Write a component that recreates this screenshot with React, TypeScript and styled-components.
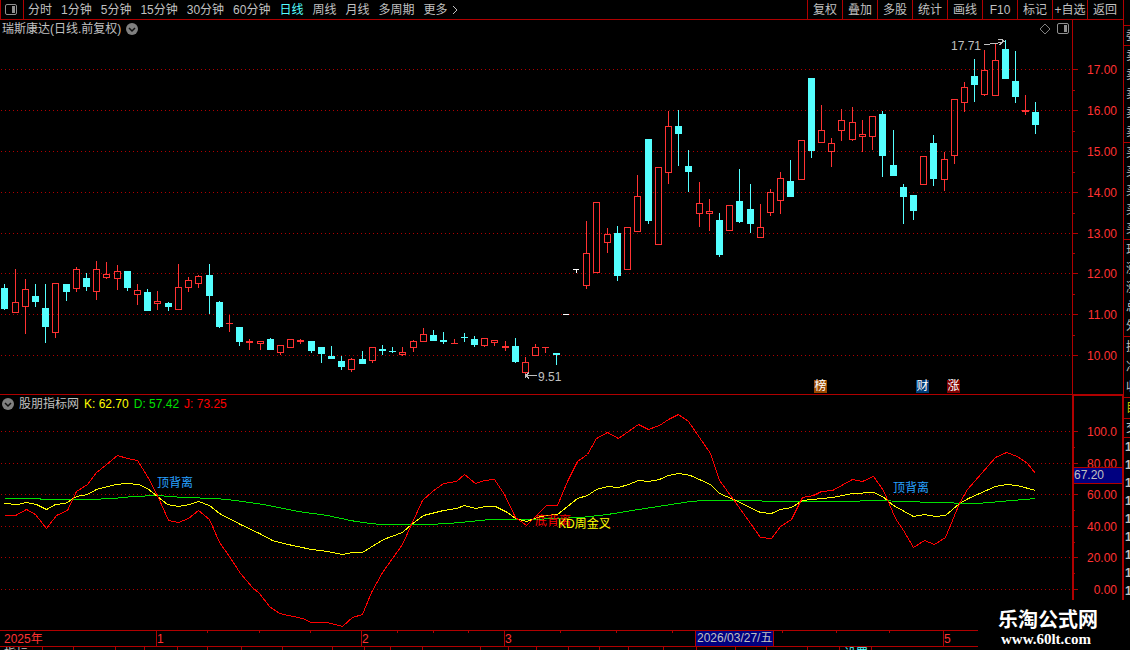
import { Fragment } from 'react';
import styled, { createGlobalStyle } from 'styled-components';

const LINE = '#b00000';
const UP = '#ff3232';
const DOWN = '#54ffff';
const TEXT = '#c0c0c0';
const FONT = '"Liberation Sans", "Noto Sans CJK SC", sans-serif';

const GlobalStyle = createGlobalStyle`
  * {
    box-sizing: border-box;
  }
  body {
    margin: 0;
    background: #000;
    color: ${TEXT};
    font: 12px/16px ${FONT};
    overflow: hidden;
  }
  svg {
    display: block;
  }
  svg text {
    font: 12px ${FONT};
  }
  button {
    margin: 0;
    padding: 0;
    border: 0;
    background: none;
    color: inherit;
    font: inherit;
    white-space: nowrap;
    cursor: pointer;
  }
`;

const Page = styled.div`
  position: relative;
  display: flex;
  height: 100vh;
  overflow: hidden;
`;

const Main = styled.main`
  flex: 1;
  min-width: 0;
  display: flex;
  flex-direction: column;
`;

/**
 * 顶部工具栏
 */
const Toolbar = styled.header`
  flex: none;
  display: flex;
  height: 20px;
  border-bottom: 1px solid ${LINE};
`;

const LayoutButton = styled.button`
  width: 24px;
  padding-left: 4px;
  border-left: 1px solid ${LINE};
  border-right: 1px solid ${LINE};
`;

const Periods = styled.nav`
  flex: 1;
  display: flex;
  align-items: center;
  gap: 9px;
  padding-left: 4px;
`;

const Period = styled.button<{ $active?: boolean }>`
  display: flex;
  align-items: center;
  gap: 4px;
  color: ${(p) => (p.$active ? DOWN : TEXT)};
`;

const Tool = styled.button`
  width: 35px;
  border-left: 1px solid ${LINE};
`;

const Tools = styled.div`
  display: flex;
  padding-right: 1px;
`;

/**
 * 图表区域
 */
const Pane = styled.section<{ $h: number; $line?: boolean }>`
  flex: none;
  display: flex;
  height: ${(p) => p.$h}px;
  border-bottom: ${(p) => (p.$line ? `1px solid ${LINE}` : '0')};
`;

const Plot = styled.div`
  position: relative;
  flex: 1;
  min-width: 0;
`;

const Chart = styled.svg`
  width: 100%;
  height: 100%;
  overflow: visible;
`;

const Scale = styled.svg`
  flex: none;
  width: 51px;
  height: 100%;
  overflow: visible;
`;

const Legend = styled.div`
  position: absolute;
  top: 0;
  left: 2px;
  display: flex;
  align-items: center;
  gap: 5px;
  height: 18px;
  z-index: 1;
`;

const LegendValue = styled.span<{ $color: string }>`
  color: ${(p) => p.$color};
`;

const PaneTools = styled.div`
  position: absolute;
  top: 3px;
  right: 3px;
  display: flex;
  gap: 6px;
`;

const Badge = styled.span<{ $x: number; $bg: string }>`
  position: absolute;
  left: ${(p) => p.$x}px;
  bottom: 1px;
  width: 13px;
  height: 13px;
  background: ${(p) => p.$bg};
  color: #fff;
  line-height: 13px;
  text-align: center;
`;

const TimeAxis = styled.svg`
  flex: none;
  width: 100%;
  height: 17px;
`;

const BottomTabs = styled.footer`
  flex: 1;
  display: flex;
  min-height: 0;
  overflow: hidden;
`;

const BottomTab = styled.span<{ $w: number; $active?: boolean }>`
  flex: none;
  width: ${(p) => p.$w}px;
  padding-left: 4px;
  border-right: 1px solid ${LINE};
  color: ${(p) => (p.$active ? DOWN : TEXT)};
  line-height: 14px;
`;

/**
 * 右侧报价栏，窗口里只露出一条边
 */
const Side = styled.aside`
  flex: none;
  width: 7px;
  border-left: 1px solid ${LINE};
  overflow: hidden;
`;

const SideGroup = styled.div<{ $h: number; $color?: string }>`
  display: flex;
  flex-direction: column;
  justify-content: space-around;
  height: ${(p) => p.$h}px;
  padding-left: 2px;
  border-bottom: 1px solid ${LINE};
  color: ${(p) => p.$color || TEXT};
  white-space: nowrap;
  overflow: hidden;
`;

const Tick = styled.div`
  padding-left: 1px;
  line-height: 18px;
  font-weight: bold;
`;

const Watermark = styled.div`
  position: absolute;
  right: 0;
  bottom: 0;
  width: 152px;
  height: 50px;
  padding: 7px 0 0 20px;
  background: #000;
  color: #fff;
`;

const SiteName = styled.div`
  font: bold 20px/24px "Noto Sans CJK SC", sans-serif;
`;

const SiteUrl = styled.div`
  padding-left: 3px;
  font: bold 15px/16px "Liberation Serif", serif;
`;

const periods = ['分时', '1分钟', '5分钟', '15分钟', '30分钟', '60分钟', '日线', '周线', '月线', '多周期', '更多'];
const tools = ['复权', '叠加', '多股', '统计', '画线', 'F10', '标记', '+自选', '返回'];

// 类型, 最高, 实体上沿, 实体下沿, 最低
type Candle = ['u' | 'd' | 'w', number, number, number, number];

const candles: Candle[] = [
  ['d', 284, 288, 309, 310], ['u', 269, 302, 313, 313], ['u', 279, 289, 307, 334], ['d', 284, 296, 302, 307],
  ['d', 284, 308, 327, 343], ['u', 283, 283, 333, 338], ['d', 284, 284, 292, 301], ['u', 267, 269, 289, 292],
  ['d', 273, 278, 287, 291], ['u', 261, 269, 292, 300], ['u', 262, 274, 278, 279], ['u', 265, 271, 279, 290],
  ['d', 271, 271, 288, 291], ['u', 284, 290, 295, 305], ['d', 289, 292, 311, 311], ['u', 291, 301, 304, 310],
  ['d', 302, 303, 307, 311], ['u', 264, 287, 310, 310], ['u', 277, 280, 288, 292], ['u', 275, 276, 284, 288],
  ['d', 264, 275, 296, 314], ['d', 301, 302, 327, 328], ['u', 315, 323, 324, 332], ['d', 327, 327, 342, 346],
  ['u', 339, 341, 343, 350], ['u', 341, 341, 344, 350], ['d', 338, 339, 350, 350], ['u', 345, 345, 353, 355],
  ['u', 339, 339, 348, 348], ['u', 339, 340, 342, 344], ['d', 341, 341, 351, 353], ['d', 347, 347, 354, 363],
  ['d', 346, 356, 359, 359], ['d', 356, 361, 367, 370], ['u', 358, 359, 370, 372], ['d', 351, 359, 364, 364],
  ['u', 347, 347, 361, 363], ['d', 345, 349, 351, 355], ['d', 347, 351, 352, 353], ['u', 347, 352, 355, 356],
  ['u', 340, 341, 348, 352], ['u', 328, 334, 342, 342], ['d', 330, 335, 341, 341], ['d', 332, 340, 342, 344],
  ['u', 339, 343, 344, 344], ['d', 333, 337, 338, 342], ['d', 336, 339, 345, 347], ['u', 338, 338, 346, 347],
  ['u', 340, 340, 343, 346], ['u', 341, 346, 348, 351], ['d', 338, 346, 362, 363], ['u', 357, 362, 373, 374],
  ['u', 344, 347, 356, 356], ['u', 347, 347, 348, 353], ['d', 353, 353, 355, 365], ['w', 314, 314, 315, 315],
  ['w', 269, 269, 270, 273], ['u', 221, 253, 286, 289], ['u', 202, 202, 273, 273], ['u', 228, 234, 243, 253],
  ['d', 226, 233, 276, 281], ['u', 227, 227, 270, 270], ['u', 175, 196, 232, 232], ['d', 139, 139, 221, 224],
  ['u', 167, 167, 245, 245], ['u', 111, 126, 173, 184], ['d', 110, 126, 134, 166], ['d', 150, 166, 172, 192],
  ['u', 182, 203, 214, 227], ['u', 199, 211, 214, 231], ['d', 213, 220, 255, 257], ['u', 205, 205, 231, 231],
  ['d', 169, 201, 222, 223], ['d', 184, 209, 224, 233], ['u', 204, 227, 238, 238], ['u', 189, 192, 213, 216],
  ['u', 172, 178, 201, 214], ['d', 160, 181, 197, 197], ['u', 140, 140, 180, 180], ['d', 78, 78, 151, 158],
  ['u', 105, 130, 143, 143], ['u', 138, 143, 152, 167], ['u', 109, 120, 131, 141], ['u', 107, 122, 140, 141],
  ['u', 120, 134, 137, 152], ['u', 116, 116, 137, 150], ['d', 111, 114, 156, 177], ['d', 130, 165, 176, 176],
  ['d', 184, 187, 197, 224], ['d', 195, 195, 211, 220], ['u', 156, 156, 185, 185], ['d', 135, 143, 179, 186],
  ['u', 152, 159, 180, 191], ['u', 99, 99, 156, 164], ['u', 82, 87, 103, 112], ['d', 59, 76, 85, 102],
  ['u', 50, 70, 95, 96], ['u', 43, 60, 96, 96], ['d', 40, 49, 79, 79], ['d', 51, 81, 97, 103],
  ['u', 95, 110, 112, 115], ['d', 102, 112, 125, 134],
];

const candleColor = { u: UP, d: DOWN, w: '#fff' };

const lineJ = '4,515 15,515 26,509 35,514 46,528 56,515 67,510 76,491 87,484 96,472 105,465 117,455 127,458 137,460 147,476 157,495 168,520 178,522 188,518 198,510 209,519 219,542 229,556 240,573 252,587 259,593 269,606 279,613 302,618 311,622 327,622 342,626 352,617 362,614 371,592 382,572 402,544 411,524 422,500 432,491 443,483 456,481 464,474 475,483 484,480 494,479 504,494 515,517 526,525 546,505 557,505 567,481 577,461 587,454 596,438 607,432 618,438 638,424 648,429 659,425 668,419 678,414 688,421 699,437 710,453 719,480 733,499 760,537 771,538 780,526 791,519 802,497 813,495 821,491 832,490 852,479 862,481 873,476 883,490 895,518 903,530 913,547 924,540 934,544 945,537 959,503 967,489 995,457 1006,452 1017,456 1027,463 1035,473';
const lineK = '4,503 17,504 26,502 36,504 46,509 55,504 65,503 76,496 87,494 96,489 115,484 127,483 138,484 147,488 157,496 167,504 178,506 189,504 198,501 209,505 219,513 240,524 259,533 272,540 283,543 311,549 327,551 342,554 352,552 362,552 370,547 383,539 402,532 411,524 423,515 443,510 456,508 464,505 475,508 485,506 495,506 507,512 515,518 526,521 537,517 545,515 557,514 577,498 587,495 596,489 607,486 618,487 628,484 638,480 648,481 659,479 668,475 678,473 690,475 710,484 719,493 733,499 760,512 771,513 780,509 791,507 802,500 832,497 852,493 873,492 882,496 893,505 913,516 924,514 935,516 945,515 959,503 968,498 995,486 1006,484 1017,485 1035,490';
const lineD = '4,498 38,498 42,499 88,499 113,498 133,496 157,495 183,497 215,498 235,500 263,504 298,511 327,515 350,520 362,522 380,524 428,524 448,523 470,521 490,519 532,519 580,517 607,514 638,509 690,501 703,500 755,500 768,501 847,501 873,500 908,501 930,502 977,503 1000,501 1035,498';

const priceTicks: [string, number][] = [
  ['17.00', 69], ['16.00', 110], ['15.00', 151], ['14.00', 192],
  ['13.00', 233], ['12.00', 273], ['11.00', 314], ['10.00', 355],
];
const priceMinor = [90, 131, 172, 213, 253, 294, 335];

const kdjTicks: [string, number][] = [
  ['100.0', 431], ['80.00', 463], ['60.00', 494], ['40.00', 526], ['20.00', 557], ['0.00', 589],
];
const kdjMinor = [447, 479, 510, 542, 573];

const months: [string, number][] = [['1', 156], ['2', 361], ['3', 504], ['5', 943]];
const weekTicks = [207, 259, 310, 397, 433, 468, 560, 616, 672, 782, 836, 889];
const tabEdges = [42, 73, 115, 144, 177, 207, 241, 282, 332, 364, 390, 422, 480, 508, 536, 568, 599, 628, 663, 696, 735, 766, 807, 839, 871];
const tabNames: Record<number, string> = { 42: '指标', 871: '设置' };

const sideGroups: [number, string[]][] = [
  [20, ['委比']],
  [97, ['卖五', '卖四', '卖三', '卖二', '卖一']],
  [97, ['买一', '买二', '买三', '买四', '买五']],
  [97, ['现价', '涨跌', '涨幅', '总量', '外盘']],
  [61, ['换手', '净资', '收益']],
];

const LayoutIcon = () => (
  <svg width="12" height="11" viewBox="0 0 12 11">
    <rect x="0.5" y="0.5" width="11" height="10" rx="1.5" fill="none" stroke="#909090" />
    <rect x="7" y="2" width="3" height="7" fill="#909090" />
  </svg>
);

const DiamondIcon = () => (
  <svg width="12" height="12" viewBox="0 0 12 12">
    <path d="M6 1L11 6L6 11L1 6Z" fill="none" stroke="#808080" />
  </svg>
);

const DropIcon = () => (
  <svg width="12" height="12" viewBox="0 0 12 12">
    <circle cx="6" cy="6" r="6" fill="#808080" />
    <path d="M3 5L6 8L9 5" fill="none" stroke="#101010" strokeWidth="1.5" />
  </svg>
);

const Grid = ({ ys }: { ys: number[] }) => (
  <g stroke={LINE} strokeDasharray="1 3">
    {ys.map((y) => <line key={y} x1="1" x2="100%" y1={y + 0.5} y2={y + 0.5} />)}
  </g>
);

const Candles = () => (
  <g>
    {candles.map(([kind, high, top, bottom, low], i) => {
      const x = Math.floor(4.84 + i * 10.209);
      const color = candleColor[kind];
      const hollow = kind === 'u' && bottom - top > 2;
      return (
        <Fragment key={i}>
          <rect x={x} y={high} width="1" height={top - high} fill={color} />
          <rect x={x} y={bottom} width="1" height={low - bottom} fill={color} />
          {hollow
            ? <rect x={x - 2.5} y={top + 0.5} width="6" height={bottom - top - 1} fill="none" stroke={color} />
            : <rect x={x - 3} y={top} width={kind === 'w' ? 6 : 7} height={bottom - top} fill={color} />}
        </Fragment>
      );
    })}
  </g>
);

const ScaleTicks = ({ ticks, minor }: { ticks: [string, number][]; minor: number[] }) => (
  <g>
    {minor.map((y) => <rect key={y} x="1" y={y} width="2" height="1" fill={LINE} />)}
    {ticks.map(([label, y]) => (
      <Fragment key={label}>
        <rect x="0" y={y} width="6" height="1" fill={LINE} />
        <text x="45" y={y + 5} textAnchor="end" fill={UP}>{label}</text>
      </Fragment>
    ))}
  </g>
);

export default function App() {
  return (
    <Page>
      <GlobalStyle />
      <Main>
        <Toolbar>
          <LayoutButton aria-label="布局"><LayoutIcon /></LayoutButton>
          <Periods>
            {periods.map((name) => (
              <Period key={name} $active={name === '日线'}>
                {name}
                {name === '更多' && (
                  <svg width="6" height="10" viewBox="0 0 6 10">
                    <path d="M1 1L5 5L1 9" fill="none" stroke={TEXT} />
                  </svg>
                )}
              </Period>
            ))}
          </Periods>
          <Tools>
            {tools.map((name) => <Tool key={name}>{name}</Tool>)}
          </Tools>
        </Toolbar>

        {/* K线主图 */}
        <Pane $h={375} $line>
          <Plot>
            <Legend>
              <span>瑞斯康达(日线.前复权)</span>
              <DropIcon />
            </Legend>
            <PaneTools>
              <DiamondIcon />
              <LayoutIcon />
            </PaneTools>
            <Chart>
              <g transform="translate(0 -20)" shapeRendering="crispEdges">
                <Grid ys={priceTicks.map((t) => t[1])} />
                <Candles />
                <path d="M984 44.5H988L992 43.5H996L1004 41.5M998 39.5H1002L1004 41.5L999 45" fill="none" stroke={TEXT} />
                <path d="M537 375.5H526M529 372.5L526 375.5L529 378.5M525.5 374V378" fill="none" stroke={TEXT} />
                <text x="951" y="50" fill={TEXT}>17.71</text>
                <text x="538" y="381" fill={TEXT}>9.51</text>
              </g>
            </Chart>
            <Badge $x={814} $bg="#984800">榜</Badge>
            <Badge $x={916} $bg="#003c78">财</Badge>
            <Badge $x={947} $bg="#800000">涨</Badge>
          </Plot>
          <Scale>
            <g transform="translate(0 -20)">
              <rect x="0" y="20" width="1" height="375" fill={LINE} />
              <ScaleTicks ticks={priceTicks} minor={priceMinor} />
            </g>
          </Scale>
        </Pane>

        {/* KDJ 副图 */}
        <Pane $h={235}>
          <Plot>
            <Legend>
              <DropIcon />
              <span>股朋指标网</span>
              <LegendValue $color="#ffff00">K: 62.70</LegendValue>
              <LegendValue $color="#00e000">D: 57.42</LegendValue>
              <LegendValue $color="#ff0000">J: 73.25</LegendValue>
            </Legend>
            <Chart>
              <g transform="translate(0 -395)" shapeRendering="crispEdges">
                <Grid ys={kdjTicks.map((t) => t[1])} />
                <g fill="none" transform="translate(0.5 0.5)">
                  <polyline points={lineD} stroke="#00e000" />
                  <polyline points={lineK} stroke="#ffff00" />
                  <polyline points={lineJ} stroke="#ff0000" />
                </g>
                <text x="157" y="487" fill="#28a0ff">顶背离</text>
                <text x="893" y="492" fill="#28a0ff">顶背离</text>
                <text x="535" y="525" fill="#ff0000">底背离</text>
                <text x="558" y="528" fill="#ffff00">KD周金叉</text>
              </g>
            </Chart>
          </Plot>
          <Scale>
            <g transform="translate(0 -395)">
              <path d="M1 630V395H51V630" fill="none" stroke={LINE} strokeWidth="2" />
              <ScaleTicks ticks={kdjTicks} minor={kdjMinor} />
              <rect x="2" y="467" width="48" height="17" fill={LINE} />
              <rect x="2" y="468" width="48" height="15" fill="#000080" />
              <text x="2" y="479" fill={TEXT}>67.20</text>
            </g>
          </Scale>
        </Pane>

        <TimeAxis>
          <rect x="0" y="0" width="100%" height="1" fill={LINE} />
          <rect x="0" y="16" width="100%" height="1" fill={LINE} />
          {weekTicks.map((x) => <rect key={x} x={x} y="1" width="1" height="2" fill={LINE} />)}
          <text x="4" y="13" fill={UP}>2025年</text>
          {months.map(([label, x]) => (
            <Fragment key={label}>
              <rect x={x} y="1" width="1" height="15" fill={LINE} />
              <text x={x + 1} y="13" fill={UP}>{label}</text>
            </Fragment>
          ))}
          <rect x="695" y="1" width="79" height="15" fill={LINE} />
          <rect x="696" y="1" width="77" height="15" fill="#000080" />
          <text x="697" y="12" fill={TEXT}>2026/03/27/五</text>
        </TimeAxis>

        <BottomTabs>
          {tabEdges.map((edge, i) => (
            <BottomTab key={edge} $w={edge - (i ? tabEdges[i - 1] : -1)} $active={edge === 871}>
              {tabNames[edge]}
            </BottomTab>
          ))}
        </BottomTabs>
      </Main>

      <Side>
        <SideGroup $h={26} />
        {sideGroups.map(([h, rows]) => (
          <SideGroup key={rows[0]} $h={h}>
            {rows.map((row) => <span key={row}>{row}</span>)}
          </SideGroup>
        ))}
        <SideGroup $h={21} $color="#c0c000">目</SideGroup>
        <SideGroup $h={19}>交</SideGroup>
        {Array.from({ length: 9 }, (_, i) => <Tick key={i}>1</Tick>)}
      </Side>

      <Watermark>
        <SiteName>乐淘公式网</SiteName>
        <SiteUrl>www.60lt.com</SiteUrl>
      </Watermark>
    </Page>
  );
}
